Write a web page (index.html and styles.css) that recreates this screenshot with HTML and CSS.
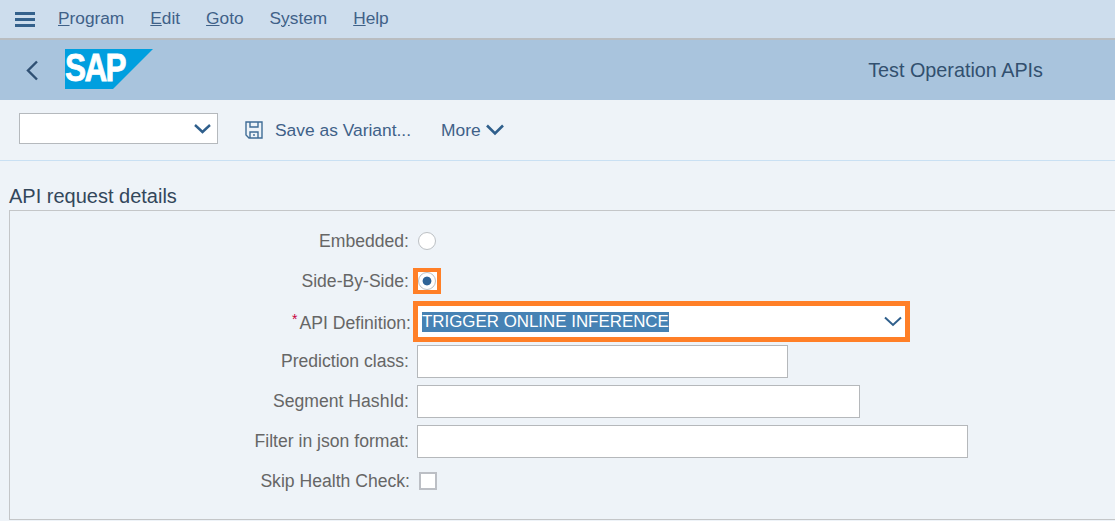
FILE: index.html
```html
<!DOCTYPE html>
<html>
  <head>
    <meta charset="UTF-8">
    <title>Test Operation APIs</title>
    <link rel="stylesheet" href="styles.css">
  </head>
  <body>
    <div class="menubar">
      <svg class="burger" width="20" height="15" viewBox="0 0 20 15"><path d="M0 0h20v3H0zM0 6h20v3H0zM0 12h20v3H0z" fill="#34618c"/></svg>
      <span class="menu menu-program"><u>P</u>rogram</span>
      <span class="menu menu-edit"><u>E</u>dit</span>
      <span class="menu menu-goto"><u>G</u>oto</span>
      <span class="menu menu-system">S<u>y</u>stem</span>
      <span class="menu menu-help"><u>H</u>elp</span>
    </div>

    <div class="titlebar">
      <svg class="back" width="13" height="21" viewBox="0 0 13 21"><path d="M11 1.5 2 10.5l9 9" fill="none" stroke="#2f5073" stroke-width="2.4"/></svg>
      <div class="logo">
        <svg width="88" height="40" viewBox="0 0 88 40"><polygon points="0,0 88,0 48,40 0,40" fill="#009fdf"/></svg>
        <span class="logo-text">SAP</span>
      </div>
      <div class="apptitle">Test Operation APIs</div>
    </div>

    <div class="toolbar">
      <div class="variant">
        <svg width="19" height="11" viewBox="0 0 19 11"><path d="M2 2l7.5 7L17 2" fill="none" stroke="#2f5f8c" stroke-width="2.4"/></svg>
      </div>
      <svg class="save" width="18" height="18" viewBox="0 0 18 18"><path d="M1 1h16v16H4l-3-3zM5 1v5h8V1M5 17v-6h8v6M9 13v2" fill="none" stroke="#3f6c96" stroke-width="1.4"/></svg>
      <span class="toolbtn">Save as Variant...</span>
      <span class="toolbtn more">More</span>
      <svg width="18" height="12" viewBox="0 0 18 12"><path d="M1 1.5l8 8 8-8" fill="none" stroke="#2f5f8c" stroke-width="2.6"/></svg>
    </div>

    <div class="section-title">API request details</div>
    <div class="formbox">
      <div class="row">
        <label>Embedded:</label>
        <span class="radio"></span>
      </div>
      <div class="row">
        <label>Side-By-Side:</label>
        <span class="mark-radio"><span class="radio radio-on"></span></span>
      </div>
      <div class="row">
        <label class="label-api"><span class="req">*</span>API Definition:</label>
        <div class="mark-select">
          <span class="selected">TRIGGER ONLINE INFERENCE</span>
          <svg width="18" height="11" viewBox="0 0 18 11"><path d="M1 1.5l8 7.5 8-7.5" fill="none" stroke="#2f5f8c" stroke-width="2"/></svg>
        </div>
      </div>
      <div class="row">
        <label>Prediction class:</label>
        <div class="field field-a"></div>
      </div>
      <div class="row">
        <label>Segment HashId:</label>
        <div class="field field-b"></div>
      </div>
      <div class="row">
        <label>Filter in json format:</label>
        <div class="field field-c"></div>
      </div>
      <div class="row">
        <label class="label-skip">Skip Health Check:</label>
        <span class="checkbox"></span>
      </div>
    </div>
  </body>
</html>
```

FILE: styles.css
```css
html, body {
  margin: 0;
  height: 521px;
  overflow: hidden;
  background: #eef3f8;
  font-family: "Liberation Sans", Arial, sans-serif;
}

.menubar {
  height: 38px;
  background: #cddded;
  border-bottom: 2px solid #b9bdc1;
  display: flex;
  align-items: center;
  padding-left: 15px;
}
.burger {
  margin-right: 23px;
}
.menu {
  font-size: 17.3px;
  color: #3f6188;
  padding-bottom: 2px;
}
.menu-program { margin-right: 26px; }
.menu-edit { margin-right: 26px; }
.menu-goto { margin-right: 26px; }
.menu-system { margin-right: 26px; }

.titlebar {
  height: 60px;
  background: #a9c4dd;
  display: flex;
  align-items: center;
  padding-left: 26px;
}
.back {
  margin-right: 26px;
}
.logo {
  position: relative;
  width: 88px;
  height: 40px;
  margin-top: -2px;
}
.logo svg {
  display: block;
}
.logo-text {
  position: absolute;
  left: 0;
  top: 0;
  font-size: 38px;
  line-height: 38px;
  font-weight: bold;
  letter-spacing: -2px;
  color: #fff;
  -webkit-text-stroke: 0.8px #fff;
  transform: scaleX(0.83);
  transform-origin: left top;
}
.apptitle {
  margin-left: auto;
  margin-right: 72px;
  font-size: 19.8px;
  color: #32506f;
}

.toolbar {
  height: 60px;
  border-bottom: 1px solid #c9e0f3;
  display: flex;
  align-items: center;
  padding-left: 19px;
}
.variant {
  width: 199px;
  height: 31px;
  box-sizing: border-box;
  background: #fff;
  border: 1px solid #b5b9bd;
  display: flex;
  align-items: center;
  justify-content: flex-end;
  padding-right: 5px;
  margin-right: 27px;
  margin-bottom: 3px;
}
.save {
  margin-right: 12px;
}
.toolbtn {
  font-size: 17.4px;
  color: #3f6188;
  padding-top: 1px;
}
.more {
  margin-left: 30px;
  margin-right: 5px;
}

.section-title {
  margin: 24px 0 0 9px;
  height: 25px;
  line-height: 22px;
  font-size: 20px;
  color: #33475b;
}
.formbox {
  margin-left: 9px;
  height: 310px;
  box-sizing: border-box;
  border: 1px solid #c4c6c8;
  border-right: none;
  padding-top: 10px;
}

.row {
  height: 40px;
  display: grid;
  grid-template-columns: 399px auto;
  column-gap: 8px;
  align-items: center;
  justify-content: start;
}
.row label {
  text-align: right;
  font-size: 17.6px;
  color: #666;
  padding-top: 1px;
}
.label-api {
  margin-right: -2px;
}
.label-skip {
  margin-right: -1px;
}
.req {
  color: #c8003c;
  font-size: 14px;
  vertical-align: 5px;
  margin-right: 2px;
}

.radio {
  display: block;
  width: 18px;
  height: 18px;
  box-sizing: border-box;
  margin-left: 1px;
  border-radius: 50%;
  background: #fff;
  border: 1.5px solid #bcc0c4;
}
.radio-on {
  margin: 0;
  background: radial-gradient(circle, #2f6497 0 4px, #fff 4.8px);
}
.mark-radio {
  display: block;
  width: 28px;
  height: 26px;
  box-sizing: border-box;
  margin-left: -4px;
  border: 4px solid #ff7f27;
  border-left-width: 5px;
  padding: 0;
  background: #fff;
}

.mark-select {
  width: 497px;
  height: 41px;
  box-sizing: border-box;
  margin-left: -4px;
  border: 5px solid #ff7f27;
  background: #fff;
  display: flex;
  align-items: center;
  justify-content: space-between;
  padding: 0 3px 0 4px;
}
.selected {
  background: #4682b4;
  color: #fff;
  font-size: 16.9px;
  line-height: 20px;
}

.field {
  height: 33px;
  box-sizing: border-box;
  background: #fff;
  border: 1px solid #b5b8bb;
}
.field-a { width: 371px; }
.field-b { width: 443px; }
.field-c { width: 551px; }

.checkbox {
  display: block;
  width: 18px;
  height: 18px;
  box-sizing: border-box;
  margin-left: 2px;
  background: #fff;
  border: 2px solid #bcbfc5;
}
```
